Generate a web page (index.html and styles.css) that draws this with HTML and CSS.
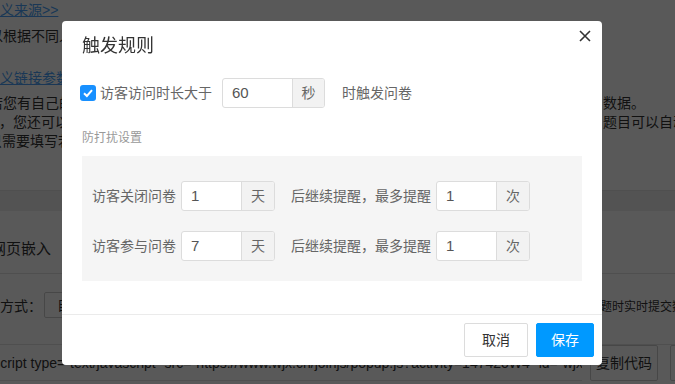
FILE: index.html
```html
<!DOCTYPE html>
<html lang="zh-CN">

<head>
    <meta charset="UTF-8">
    <meta name="viewport" content="width=device-width, initial-scale=1.0">
    <title>触发规则</title>
    <link rel="stylesheet" href="styles.css">
</head>

<body>
    <!-- 底层页面 -->
    <div class="page">
        <p class="ln ln-link"><a href="#">自定义来源&gt;&gt;</a></p>
        <p class="ln ln-2">以根据不同人群投放不同的问卷</p>
        <p class="ln ln-link ln-3"><a href="#">自定义链接参数</a></p>
        <div class="para">
            <div class="pline"><span class="head h1">若您有自己的会员系统，可以通过链接参数带入</span><span class="tail">数据。</span></div>
            <div class="pline"><span class="head h2">，您还可以将参数写入问卷，</span><span class="tail">题目可以自动填写</span></div>
            <div class="pline"><span class="head h3">只需要填写若干参数即可</span></div>
        </div>
        <div class="sep"></div>
        <div class="band"></div>
        <h3 class="sec-title">网页嵌入</h3>
        <div class="mode-row">
            <span class="mode-label">提交方式：</span>
            <span class="mode-select">自动弹出</span>
            <span class="mode-tail">题时实时提交数据</span>
        </div>
        <div class="code-row">
            <div class="code-box">&lt;script type="text/javascript" src="https://www.wjx.cn/joinjs/popup.js?activity=14742oW4" id="wjxFloatBtn"&gt;</div>
            <span class="copy-btn">复制代码</span>
            <span class="copy-btn">预览</span>
        </div>
    </div>

    <div class="mask"></div>

    <!-- 弹窗 -->
    <div class="modal">
        <div class="modal-hd">
            <h2 class="modal-title">触发规则</h2>
            <span class="modal-close">
                <svg width="12" height="12" viewBox="0 0 12 12">
                    <path d="M1 1L11 11M11 1L1 11" stroke="#333" stroke-width="1.6" fill="none"/>
                </svg>
            </span>
        </div>
        <div class="modal-bd">
            <div class="rule-row">
                <span class="chk">
                    <svg width="16" height="16" viewBox="0 0 16 16">
                        <path d="M4 8.2L6.9 11L12 5.2" stroke="#fff" stroke-width="2" fill="none"/>
                    </svg>
                </span>
                <span class="lbl lbl-chk">访客访问时长大于</span>
                <div class="igroup igroup-wide">
                    <span class="ifield">60</span>
                    <span class="iaddon">秒</span>
                </div>
                <span class="lbl lbl-after">时触发问卷</span>
            </div>

            <p class="sub-title">防打扰设置</p>

            <div class="dnd-box">
                <div class="dnd-row">
                    <span class="lbl">访客关闭问卷</span>
                    <div class="igroup">
                        <span class="ifield">1</span>
                        <span class="iaddon">天</span>
                    </div>
                    <span class="lbl lbl-mid">后继续提醒，最多提醒</span>
                    <div class="igroup">
                        <span class="ifield">1</span>
                        <span class="iaddon">次</span>
                    </div>
                </div>
                <div class="dnd-row">
                    <span class="lbl">访客参与问卷</span>
                    <div class="igroup">
                        <span class="ifield">7</span>
                        <span class="iaddon">天</span>
                    </div>
                    <span class="lbl lbl-mid">后继续提醒，最多提醒</span>
                    <div class="igroup">
                        <span class="ifield">1</span>
                        <span class="iaddon">次</span>
                    </div>
                </div>
            </div>
        </div>
        <div class="modal-ft">
            <span class="btn btn-cancel">取消</span>
            <span class="btn btn-save">保存</span>
        </div>
    </div>
</body>

</html>
```

FILE: styles.css
```css
* {
    box-sizing: border-box;
}

body {
    margin: 0;
    width: 675px;
    height: 384px;
    overflow: hidden;
    background: #fff;
    font-family: "Liberation Sans", "Noto Sans CJK SC", sans-serif;
    font-size: 14px;
    color: #333;
}

/* 底层页面 */
.page {
    width: 675px;
    overflow: hidden;
    white-space: nowrap;
}

.ln {
    margin: 0;
    line-height: 20px;
}

.ln-link {
    margin-left: -28px;
}

.ln-link a {
    color: #4a9ff5;
    text-decoration: underline;
}

.ln-2 {
    margin-top: 6px;
    margin-left: -11px;
}

.ln-3 {
    margin-top: 22px;
}

.para {
    margin-top: 6px;
    line-height: 19px;
}

.pline {
    display: flex;
    height: 19px;
}

.head {
    flex: 1;
    overflow: hidden;
}

.h1 {
    margin-left: -11px;
}

.h2 {
    margin-left: -1px;
}

.h3 {
    margin-left: -12px;
}

.tail {
    width: 72px;
    overflow: hidden;
}

.sep {
    margin-top: 39px;
    border-top: 1px solid #e3e3e3;
}

.band {
    height: 20px;
    background: #eee;
}

.sec-title {
    margin: 0;
    padding: 26px 0 12px;
    margin-left: -9px;
    font-size: 15px;
    font-weight: normal;
    line-height: 24px;
    border-bottom: 1px solid #e3e3e3;
}

.mode-row {
    display: flex;
    align-items: center;
    height: 71px;
    padding-bottom: 8px;
    border-bottom: 1px solid #e3e3e3;
}

.mode-label {
    margin-left: -28px;
}

.mode-select {
    margin-left: 2px;
    width: 200px;
    height: 26px;
    line-height: 24px;
    padding-left: 12px;
    border: 1px solid #ccc;
    border-radius: 2px;
}

.mode-tail {
    margin-left: auto;
    width: 75px;
    overflow: hidden;
    font-size: 12px;
}

.code-row {
    display: flex;
    height: 36px;
}

.code-box {
    flex: none;
    width: 597px;
    margin-left: -15px;
    line-height: 36px;
    overflow: hidden;
    border-bottom: 1px solid #e3e3e3;
}

.copy-btn {
    margin-left: 8px;
    width: 68px;
    flex: none;
    text-align: center;
    line-height: 34px;
    border: 1px solid #ccc;
    border-radius: 2px;
}

.copy-btn + .copy-btn {
    margin-left: 12px;
}

/* 遮罩 */
.mask {
    position: fixed;
    left: 0;
    top: 0;
    right: 0;
    bottom: 0;
    background: rgba(0, 0, 0, 0.65);
}

/* 弹窗 */
.modal {
    position: fixed;
    left: 62px;
    top: 21px;
    width: 540px;
    background: #fff;
    border-radius: 4px;
    font-family: "Liberation Sans", "Noto Sans CJK SC", sans-serif;
}

.modal-hd {
    position: relative;
    padding: 13px 20px 0;
}

.modal-title {
    margin: 0;
    font-size: 18px;
    font-weight: normal;
    line-height: 24px;
    color: #333;
}

.modal-close {
    position: absolute;
    right: 11px;
    top: 9px;
    width: 12px;
    height: 12px;
    display: flex;
}

.modal-bd {
    padding: 20px 20px 0;
}

.rule-row,
.dnd-row {
    display: flex;
    align-items: center;
    height: 30px;
}

.chk {
    display: flex;
    width: 16px;
    height: 16px;
    margin-left: -2px;
    border-radius: 3px;
    background: #1890ff;
}

.lbl {
    color: #666;
    font-size: 14px;
    line-height: 20px;
}

.lbl-chk {
    margin-left: 4px;
}

.lbl-after {
    margin-left: 17px;
}

.lbl-mid {
    margin-left: 16px;
}

.igroup {
    display: flex;
    height: 30px;
    margin-left: 5px;
    border: 1px solid #dcdcdc;
    border-radius: 3px;
    background: #fff;
    overflow: hidden;
}

.igroup-wide {
    margin-left: 10px;
}

.ifield {
    width: 59px;
    padding-left: 9px;
    font-size: 15px;
    line-height: 28px;
    color: #555;
}

.igroup-wide .ifield {
    width: 69px;
}

.iaddon {
    width: 33px;
    border-left: 1px solid #dcdcdc;
    background: #f2f2f2;
    text-align: center;
    line-height: 28px;
    color: #666;
}

.igroup-wide .iaddon {
    width: 32px;
}

.sub-title {
    margin: 21px 0 0;
    font-size: 12px;
    line-height: 18px;
    color: #999;
}

.dnd-box {
    margin-top: 9px;
    padding: 25px 10px 20px;
    background: #f5f5f5;
}

.dnd-row + .dnd-row {
    margin-top: 20px;
}

.modal-ft {
    display: flex;
    justify-content: flex-end;
    gap: 8px;
    margin-top: 33px;
    padding: 8px;
    border-top: 1px solid #ebebeb;
}

.btn {
    height: 34px;
    line-height: 32px;
    text-align: center;
    font-size: 14px;
    border-radius: 2px;
}

.btn-cancel {
    width: 64px;
    border: 1px solid #dcdcdc;
    color: #333;
}

.btn-save {
    width: 58px;
    border: 1px solid #0099ff;
    background: #0099ff;
    color: #fff;
}
```
